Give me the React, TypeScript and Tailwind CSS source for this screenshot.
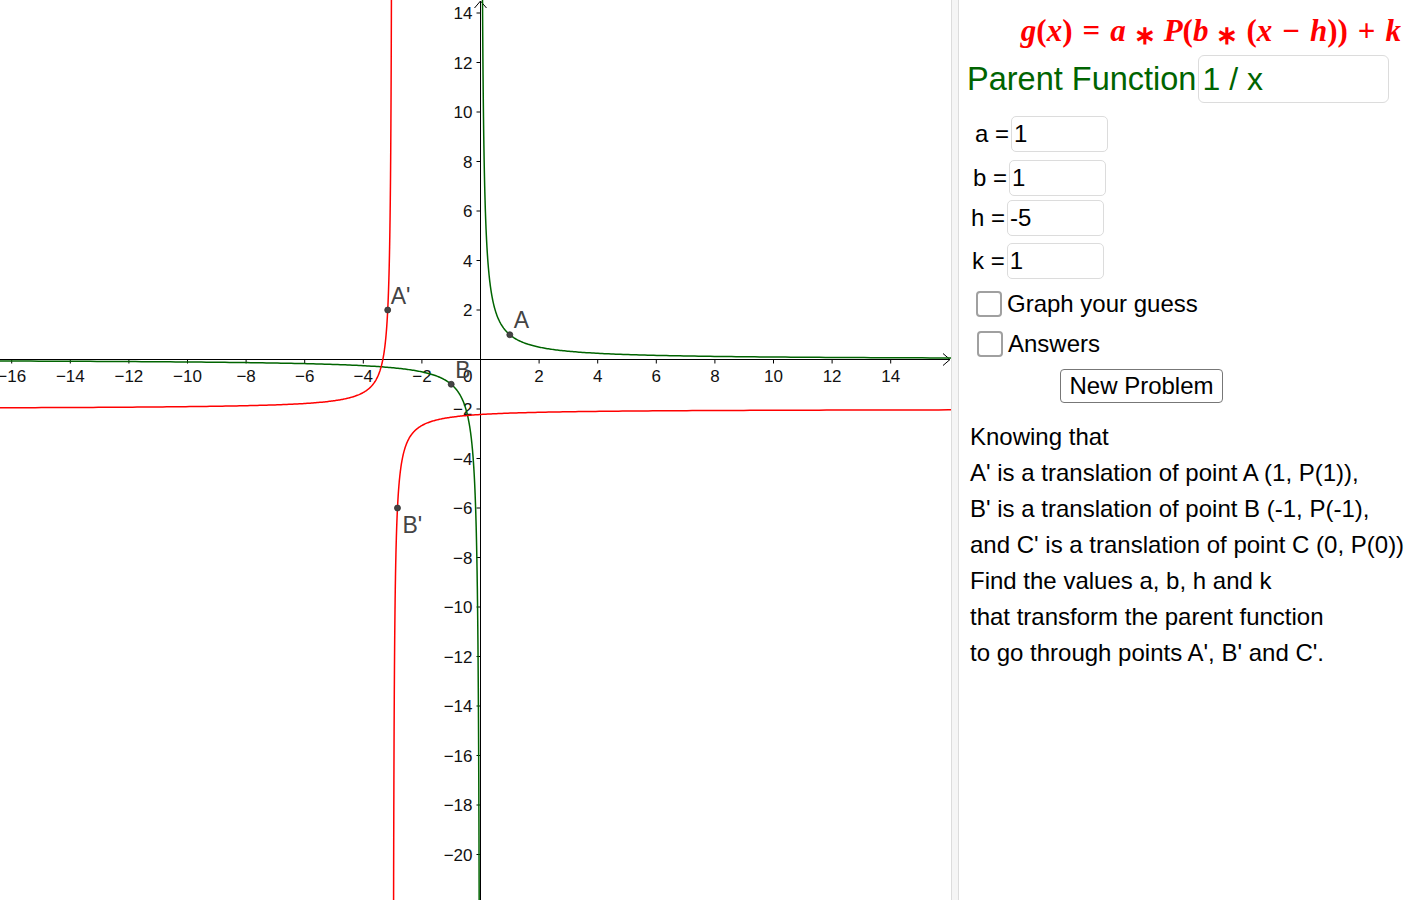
import React from "react";

// graph coordinate mapping (non-uniform axes, like the GeoGebra view)
const OX = 480.5;
const OY = 359.5;
const SX = 29.3;
const SY = 24.75;
const px = (x: number) => OX + SX * x;
const py = (y: number) => OY - SY * y;

function branch(f: (x: number) => number, asym: number, dir: 1 | -1) {
  const pts: string[] = [];
  for (let i = 0; i <= 600; i++) {
    const d = 0.0005 * Math.pow(40000, i / 600);
    const x = asym + dir * d;
    const X = px(x);
    const Y = py(f(x));
    if (X < -20 || X > 971 || Y < -60 || Y > 960) continue;
    pts.push(`${X.toFixed(2)},${Y.toFixed(2)}`);
  }
  if (dir === -1) pts.reverse();
  return "M" + pts.join("L");
}

const parent = (x: number) => 1 / x;
// g(x) = a * P(b * (x - h)) + k with a = 4, b = -6, h = -3, k = -2
const target = (x: number) => 4 * parent(-6 * (x + 3)) - 2;

const xLabels = [-16, -14, -12, -10, -8, -6, -4, -2, 2, 4, 6, 8, 10, 12, 14];
const yLabels = [14, 12, 10, 8, 6, 4, 2, -2, -4, -6, -8, -10, -12, -14, -16, -18, -20];

const fmt = (v: number) => (v < 0 ? `\u2212${-v}` : `${v}`);

function Graph() {
  const green = "#006400";
  const red = "#ff0000";
  const points = [
    { x: 1, y: 1, label: "A", dx: 4, dy: -7 },
    { x: -1, y: -1, label: "B", dx: 4, dy: -6 },
    { x: -3 - 1 / 6, y: 2, label: "A'", dx: 3, dy: -6 },
    { x: -3 + 1 / 6, y: -6, label: "B'", dx: 5, dy: 25 },
  ];
  return (
    <svg width={951} height={900} className="block shrink-0" style={{ fontFamily: '"Liberation Sans", Arial, sans-serif' }}>
      {/* axes */}
      <line x1={0} y1={OY} x2={950} y2={OY} stroke="#000" strokeWidth={1} />
      <polyline points={`943,${OY - 6} 950,${OY} 943,${OY + 6}`} fill="none" stroke="#000" strokeWidth={1} />
      <line x1={OX} y1={900} x2={OX} y2={1} stroke="#000" strokeWidth={1} />
      <polyline points={`${OX - 6},8 ${OX},1 ${OX + 6},8`} fill="none" stroke="#000" strokeWidth={1} />

      {xLabels.map((v) => (
        <g key={`x${v}`}>
          <line x1={px(v)} y1={OY} x2={px(v)} y2={OY + 4} stroke="#000" />
          <text x={px(v)} y={OY + 22} fontSize={17} textAnchor="middle" fill="#111">
            {fmt(v)}
          </text>
        </g>
      ))}
      {yLabels.map((v) => (
        <g key={`y${v}`}>
          <line x1={OX - 4} y1={py(v)} x2={OX} y2={py(v)} stroke="#000" />
          <text x={OX - 8} y={py(v) + 6} fontSize={17} textAnchor="end" fill="#111">
            {fmt(v)}
          </text>
        </g>
      ))}
      <text x={OX - 8} y={OY + 22} fontSize={17} textAnchor="end" fill="#111">
        0
      </text>

      {/* curves */}
      <path d={branch(parent, 0, 1)} fill="none" stroke={green} strokeWidth={1.5} />
      <path d={branch(parent, 0, -1)} fill="none" stroke={green} strokeWidth={1.5} />
      <path d={branch(target, -3, 1)} fill="none" stroke={red} strokeWidth={1.5} />
      <path d={branch(target, -3, -1)} fill="none" stroke={red} strokeWidth={1.5} />

      {points.map((p) => (
        <g key={p.label}>
          <circle cx={px(p.x)} cy={py(p.y)} r={3} fill="#444" stroke="#333" strokeWidth={0.8} />
          <text x={px(p.x) + p.dx} y={py(p.y) + p.dy} fontSize={23} fill="#444">
            {p.label}
          </text>
        </g>
      ))}
    </svg>
  );
}

function ValueRow({ name, value, pad, top }: { name: string; value: string; pad: string; top: string }) {
  return (
    <div className={`flex h-[36px] items-center ${pad} ${top}`}>
      <span className="whitespace-pre">{name} =</span>
      <div className="ml-[2px] flex h-[36px] w-[97px] items-center rounded-[5px] border border-[#dcdcdc] px-[2px]">
        {value}
      </div>
    </div>
  );
}

function Check({ label, pad, top }: { label: string; pad: string; top: string }) {
  return (
    <div className={`flex h-[26px] items-center ${pad} ${top}`}>
      <div className="h-[26px] w-[26px] rounded-[4px] border-2 border-[#a0a0a0]" />
      <span className="ml-[5px]">{label}</span>
    </div>
  );
}

function Op({ children }: { children: React.ReactNode }) {
  return <span className="mx-[10px]">{children}</span>;
}

function Star() {
  return <span className="mx-[8px] inline-block translate-y-[3px] text-[26px]">∗</span>;
}

export default function App() {
  const B = "italic";
  return (
    <div
      className="flex h-[900px] w-[1424px] overflow-hidden bg-white text-[24px] leading-none text-black"
      style={{ fontFamily: '"Liberation Sans", Arial, sans-serif' }}
    >
      <Graph />
      <div className="h-full w-[8px] shrink-0 border-x border-[#dcdcdc] bg-[#f5f5f5]" />
      <div className="flex flex-1 flex-col">
        <div
          className="mt-[12px] flex h-[36px] items-center justify-end pr-[23px] text-[31px] font-bold text-[#ff0000]"
          style={{ fontFamily: '"Liberation Serif", "Times New Roman", serif' }}
        >
          <span className="whitespace-pre">
            <span className={B}>g</span>(<span className={B}>x</span>)<Op>=</Op>
            <span className={B}>a</span>
            <Star />
            <span className={B}>P</span>(<span className={B}>b</span>
            <Star />
            (<span className={B}>x</span>
            <Op>−</Op>
            <span className={B}>h</span>))<Op>+</Op>
            <span className={B}>k</span>
          </span>
        </div>

        <div className="mt-[7px] flex h-[48px] items-center pl-[8px] text-[32.5px] text-[#006400]">
          <span>Parent Function</span>
          <div className="ml-[2px] flex h-[48px] w-[191px] items-center rounded-[6px] border border-[#dcdcdc] px-[3px] text-[32px]">
            1 / x
          </div>
        </div>

        <ValueRow name="a" value="1" pad="pl-[16px]" top="mt-[13px]" />
        <ValueRow name="b" value="1" pad="pl-[14px]" top="mt-[8px]" />
        <ValueRow name="h" value="-5" pad="pl-[12px]" top="mt-[4px]" />
        <ValueRow name="k" value="1" pad="pl-[13px]" top="mt-[7px]" />

        <Check label="Graph your guess" pad="pl-[17px]" top="mt-[12px]" />
        <Check label="Answers" pad="pl-[18px]" top="mt-[14px]" />

        <div className="mt-[12px] pl-[101px]">
          <button
            type="button"
            className="flex h-[34px] w-[163px] items-center justify-center rounded-[4px] border border-[#777] bg-white"
          >
            New Problem
          </button>
        </div>

        <div className="mt-[16px] pl-[11px] leading-[36px] whitespace-nowrap">
          <p>Knowing that</p>
          <p>A' is a translation of point A (1, P(1)),</p>
          <p>B' is a translation of point B (-1, P(-1),</p>
          <p>and C' is a translation of point C (0, P(0))</p>
          <p>Find the values a, b, h and k</p>
          <p>that transform the parent function</p>
          <p>to go through points A', B' and C'.</p>
        </div>
      </div>
    </div>
  );
}
